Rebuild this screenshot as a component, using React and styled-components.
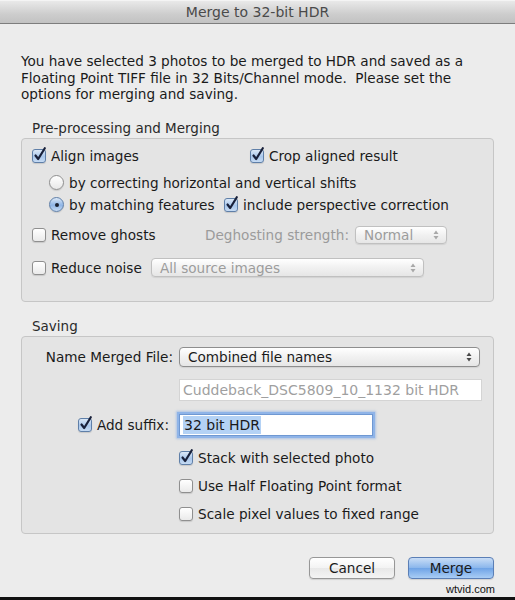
import React from "react";
import styled, { createGlobalStyle, css } from "styled-components";

const GlobalStyle = createGlobalStyle`
  body {
    margin: 0;
    background: #ececec;
    font-family: "DejaVu Sans", "Noto Sans", sans-serif;
    color: #1a1a1a;
  }
`;

const Window = styled.div`
  width: 515px;
  height: 600px;
  box-sizing: border-box;
  background: #ececec;
  border-bottom: 3px solid #111;
  display: flex;
  flex-direction: column;
  position: relative;
`;

const TitleBar = styled.div`
  height: 24px;
  box-sizing: border-box;
  background: linear-gradient(#e9e9e9, #cdcdcd 60%, #c2c2c2);
  border-bottom: 1px solid #7d7d7d;
  border-top: 1px solid #f4f4f4;
  display: flex;
  align-items: center;
  justify-content: center;
  font-size: 14px;
  color: #4a4a4a;
`;

const Content = styled.div`
  padding: 0 21px 0 21px;
  display: flex;
  flex-direction: column;
`;

const Intro = styled.p`
  margin: 29px 0 0 0;
  font-size: 13.6px;
  line-height: 16.5px;
  color: #1a1a1a;
`;

const GroupLabel = styled.div`
  font-size: 13.5px;
  color: #2a2a2a;
  margin: ${(p) => p.$top}px 0 2px 11px;
  line-height: 16px;
`;

const Group = styled.div`
  border: 1px solid #c6c6c6;
  border-radius: 4px;
  background: #e4e4e4;
  display: flex;
  flex-direction: column;
  padding: ${(p) => p.$pad};
`;

const Row = styled.div`
  display: flex;
  align-items: center;
  height: ${(p) => p.$h || 18}px;
  margin-top: ${(p) => p.$gap || 0}px;
  padding-left: ${(p) => p.$indent || 0}px;
`;

const Option = styled.label`
  display: flex;
  align-items: center;
  gap: 5px;
  font-size: 13.6px;
  color: #1a1a1a;
  white-space: nowrap;
  width: ${(p) => (p.$w ? `${p.$w}px` : "auto")};
`;

const Box = styled.span`
  position: relative;
  width: 12px;
  height: 12px;
  flex: none;
  border-radius: 3px;
  border: 1px solid ${(p) => (p.$on ? "#5f7fa8" : "#8f8f8f")};
  background: ${(p) =>
    p.$on
      ? "linear-gradient(#dbe8f7, #a9c7ec 55%, #c6dbf3)"
      : "linear-gradient(#ffffff, #eaeaea)"};
  box-shadow: 0 1px 1px rgba(0, 0, 0, 0.12);
`;

const Tick = styled.svg`
  position: absolute;
  left: 0px;
  top: -4px;
`;

const Dial = styled.span`
  position: relative;
  width: 13px;
  height: 13px;
  flex: none;
  border-radius: 50%;
  border: 1px solid ${(p) => (p.$on ? "#5f7fa8" : "#8f8f8f")};
  background: ${(p) =>
    p.$on
      ? "linear-gradient(#dbe8f7, #8fb5e6 55%, #c6dbf3)"
      : "linear-gradient(#ffffff, #e8e8e8)"};
  box-shadow: 0 1px 1px rgba(0, 0, 0, 0.12);
  ${(p) =>
    p.$on &&
    css`
      &::after {
        content: "";
        position: absolute;
        left: 4.5px;
        top: 4.5px;
        width: 4px;
        height: 4px;
        border-radius: 50%;
        background: #1b2130;
      }
    `}
`;

const CheckBox = ({ on, label, w }) => (
  <Option $w={w}>
    <Box $on={on}>
      {on && (
        <Tick width="14" height="16" viewBox="0 0 14 16">
          <path
            d="M2.5 9.5 L5.2 13 L11.8 2.2"
            fill="none"
            stroke="#18203a"
            strokeWidth="2.2"
            strokeLinecap="round"
            strokeLinejoin="round"
          />
        </Tick>
      )}
    </Box>
    {label}
  </Option>
);

const Radio = ({ on, label, w }) => (
  <Option $w={w}>
    <Dial $on={on} />
    {label}
  </Option>
);

const Muted = styled.span`
  font-size: 13.6px;
  color: #9b9b9b;
  margin: 0 6px 0 0;
  white-space: nowrap;
`;

const PopupBox = styled.div`
  width: ${(p) => p.$w}px;
  height: ${(p) => p.$h || 18}px;
  box-sizing: border-box;
  border: 1px solid ${(p) => (p.$off ? "#c0c0c0" : "#8e8e8e")};
  border-radius: 4px;
  background: linear-gradient(#ffffff, #f1f1f1 50%, #e6e6e6);
  box-shadow: 0 1px 1px rgba(0, 0, 0, 0.08);
  display: flex;
  align-items: center;
  justify-content: space-between;
  padding: 0 7px 0 8px;
  font-size: 13.6px;
  color: ${(p) => (p.$off ? "#9c9c9c" : "#1a1a1a")};
`;

const Popup = ({ value, w, h, off }) => (
  <PopupBox $w={w} $h={h} $off={off}>
    <span>{value}</span>
    <svg width="6" height="10" viewBox="0 0 6 10">
      <path d="M3 0.5 L5.5 4 L0.5 4 Z M3 9.5 L5.5 6 L0.5 6 Z" fill={off ? "#a8a8a8" : "#4a4a4a"} />
    </svg>
  </PopupBox>
);

const Form = styled.div`
  display: grid;
  grid-template-columns: 151px 1fr;
  column-gap: 6px;
  align-items: center;
`;

const FieldLabel = styled.div`
  display: flex;
  justify-content: flex-end;
  font-size: 13.6px;
  color: #1a1a1a;
  white-space: nowrap;
  margin-top: ${(p) => p.$gap || 0}px;
  padding-right: ${(p) => p.$pr || 0}px;
`;

const Cell = styled.div`
  display: flex;
  align-items: center;
  height: ${(p) => p.$h || 18}px;
  margin-top: ${(p) => p.$gap || 0}px;
`;

const TextField = styled.div`
  width: ${(p) => p.$w}px;
  height: 22px;
  box-sizing: border-box;
  background: #fff;
  border: 1px solid ${(p) => (p.$focus ? "#6f98d2" : "#d4d4d4")};
  ${(p) =>
    p.$focus &&
    css`
      box-shadow: 0 0 0 2px #8fb4e8, 0 0 2px 3px rgba(120, 165, 230, 0.5);
    `}
  display: flex;
  align-items: center;
  padding-left: 3px;
  font-size: 14px;
  color: ${(p) => (p.$off ? "#9f9f9f" : "#1a1a1a")};
  white-space: nowrap;
  overflow: hidden;
`;

const Selected = styled.span`
  background: #b4d2f5;
  padding: 1px 1px;
`;

const Footer = styled.div`
  display: flex;
  justify-content: flex-end;
  gap: 13px;
  margin-top: 23px;
`;

const Button = styled.button`
  width: ${(p) => p.$w}px;
  height: 22px;
  border-radius: 4px;
  font-family: inherit;
  font-size: 13.6px;
  color: #1a1a1a;
  border: 1px solid ${(p) => (p.$primary ? "#5b7fb6" : "#979797")};
  background: ${(p) =>
    p.$primary
      ? "linear-gradient(#c9ddf6, #8ab6ec 50%, #6fa3e6 51%, #a9cdf5)"
      : "linear-gradient(#ffffff, #f3f3f3 50%, #e8e8e8 51%, #f4f4f4)"};
  box-shadow: 0 1px 1px rgba(0, 0, 0, 0.12);
  padding: 0;
`;

const Watermark = styled.div`
  position: absolute;
  right: 20px;
  bottom: 2px;
  font-family: "Liberation Sans", Arial, sans-serif;
  font-size: 11px;
  color: #111;
`;

export default function App() {
  return (
    <>
      <GlobalStyle />
      <Window>
        <TitleBar>Merge to 32-bit HDR</TitleBar>
        <Content>
          <Intro>
            You have selected 3 photos to be merged to HDR and saved as a
            <br />
            Floating Point TIFF file in 32 Bits/Channel mode.&nbsp; Please set the
            <br />
            options for merging and saving.
          </Intro>

          <GroupLabel $top={17}>Pre-processing and Merging</GroupLabel>
          <Group $pad="8px 10px 23px 10px">
            <Row>
              <CheckBox on label="Align images" w={218} />
              <CheckBox on label="Crop aligned result" />
            </Row>
            <Row $gap={9} $indent={17}>
              <Radio label="by correcting horizontal and vertical shifts" />
            </Row>
            <Row $gap={4} $indent={17}>
              <Radio on label="by matching features" w={175} />
              <CheckBox on label="include perspective correction" />
            </Row>
            <Row $gap={11} $h={20}>
              <CheckBox label="Remove ghosts" w={173} />
              <Muted>Deghosting strength:</Muted>
              <Popup value="Normal" w={92} off />
            </Row>
            <Row $gap={13} $h={20}>
              <CheckBox label="Reduce noise" w={119} />
              <Popup value="All source images" w={273} h={19} off />
            </Row>
          </Group>

          <GroupLabel $top={16}>Saving</GroupLabel>
          <Group $pad="10px 10px 10px 0">
            <Form>
              <FieldLabel>Name Merged File:</FieldLabel>
              <Cell $h={20}>
                <Popup value="Combined file names" w={301} h={20} />
              </Cell>

              <div />
              <Cell $h={22} $gap={12}>
                <TextField $w={303} $off>
                  Cuddeback_DSC5809_10_1132 bit HDR
                </TextField>
              </Cell>

              <FieldLabel $gap={13} $pr={4}>
                <CheckBox on label="Add suffix:" />
              </FieldLabel>
              <Cell $h={22} $gap={13}>
                <TextField $w={194} $focus>
                  <Selected>32 bit HDR</Selected>
                </TextField>
              </Cell>

              <div />
              <Cell $gap={13}>
                <CheckBox on label="Stack with selected photo" />
              </Cell>
              <div />
              <Cell $gap={10}>
                <CheckBox label="Use Half Floating Point format" />
              </Cell>
              <div />
              <Cell $gap={10}>
                <CheckBox label="Scale pixel values to fixed range" />
              </Cell>
            </Form>
          </Group>

          <Footer>
            <Button $w={86}>Cancel</Button>
            <Button $w={86} $primary>
              Merge
            </Button>
          </Footer>
        </Content>
        <Watermark>wtvid.com</Watermark>
      </Window>
    </>
  );
}
